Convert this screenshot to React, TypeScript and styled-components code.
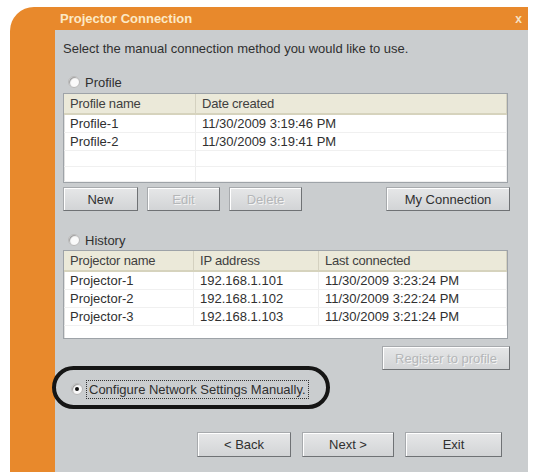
import React from "react";
import styled, { createGlobalStyle } from "styled-components";

const Global = createGlobalStyle`
  html, body { margin: 0; padding: 0; background: #ffffff; }
  body { font-family: "Liberation Sans", Arial, sans-serif; }
`;

const Frame = styled.div`
  margin: 7px 0 0 10px;
  width: 518px;
  height: 465px;
  background: #e8892c;
  border-top-left-radius: 24px;
  display: flex;
  flex-direction: column;
  overflow: visible;
`;

const TitleBar = styled.div`
  height: 23px;
  display: flex;
  align-items: center;
  justify-content: space-between;
  padding: 0 6px 0 50px;
  color: #fce9c6;
  font-weight: bold;
  font-size: 13px;
`;

const CloseX = styled.span`
  font-size: 12px;
  font-weight: bold;
  color: #f6e2c4;
`;

const Body = styled.div`
  flex: 1;
  display: flex;
`;

const Strip = styled.div`
  width: 45px;
`;

const Panel = styled.div`
  flex: 1;
  background: #cacdcf;
  padding: 11px 18px 0 8px;
  display: flex;
  flex-direction: column;
  color: #303030;
  font-size: 13px;
  position: relative;
`;

const Instruction = styled.div`
  height: 16px;
  line-height: 16px;
`;

const RadioRow = styled.label<{ $top: number }>`
  display: flex;
  align-items: center;
  gap: 5px;
  margin-top: ${(p) => p.$top}px;
  margin-left: 5px;
  height: 16px;
`;

const RadioDot = styled.span<{ $on?: boolean }>`
  width: 10px;
  height: 10px;
  border-radius: 50%;
  background: #fafafa;
  border: 1px solid #b8b8b8;
  box-shadow: inset 1px 1px 1px #9a9a9a;
  display: flex;
  align-items: center;
  justify-content: center;
  &::after {
    content: "";
    width: 4px;
    height: 4px;
    border-radius: 50%;
    background: ${(p) => (p.$on ? "#111" : "transparent")};
  }
`;

const ListBox = styled.div<{ $top: number; $height: number }>`
  margin-top: ${(p) => p.$top}px;
  height: ${(p) => p.$height}px;
  margin-right: 2px;
  background: #ffffff;
  border: 1px solid #9ea3a8;
  box-shadow: inset 1px 1px 0 #e0e0e0;
  display: flex;
  flex-direction: column;
  overflow: hidden;
`;

const HeaderRow = styled.div<{ $cols: string }>`
  display: grid;
  grid-template-columns: ${(p) => p.$cols};
  height: 19px;
  background: #ebe9d9;
  border-bottom: 2px solid #d6d3bd;
`;

const HeadCell = styled.div`
  padding-left: 6px;
  line-height: 19px;
  color: #404040;
  border-right: 1px solid #d4d1c0;
  letter-spacing: -0.2px;
  white-space: nowrap;
`;

const DataRow = styled.div<{ $cols: string }>`
  display: grid;
  grid-template-columns: ${(p) => p.$cols};
  height: 17px;
  border-bottom: 1px solid #f0f0f0;
`;

const Cell = styled.div`
  padding-left: 6px;
  line-height: 17px;
  border-right: 1px solid #eeeeee;
  white-space: nowrap;
`;

const ButtonRow = styled.div<{ $top: number }>`
  display: flex;
  gap: 9px;
  margin-top: ${(p) => p.$top}px;
`;

const Btn = styled.button<{ $w: number; $disabled?: boolean }>`
  width: ${(p) => p.$w}px;
  height: 24px;
  padding: 0;
  font-family: "Liberation Sans", Arial, sans-serif;
  font-size: 13px;
  background: linear-gradient(#e6e7e8, #d2d4d6);
  border: 1px solid #a7aaad;
  border-right-color: #6f7275;
  border-bottom-color: #6f7275;
  box-shadow: inset 1px 1px 0 #ffffff;
  color: ${(p) => (p.$disabled ? "#b4b6b8" : "#303030")};
  text-shadow: ${(p) => (p.$disabled ? "1px 1px 0 #f4f4f4" : "none")};
`;

const Spacer = styled.div`
  flex: 1;
`;

const OvalWrap = styled.div`
  position: relative;
  margin-top: 10px;
  height: 18px;
  display: flex;
  align-items: center;
  margin-left: 8px;
  gap: 5px;
`;

const Oval = styled.div`
  position: absolute;
  left: -19px;
  top: -14px;
  width: 270px;
  height: 35px;
  border: 4px solid #151515;
  border-radius: 24px;
  pointer-events: none;
`;

const FocusText = styled.span`
  outline: 1px dotted #333;
  outline-offset: 1px;
  padding: 0 1px;
`;

const Footer = styled.div`
  display: flex;
  justify-content: flex-end;
  gap: 11px;
  margin-top: 34px;
  padding-right: 8px;
`;

const FooterBtn = styled(Btn)`
  height: 25px;
`;

const profileCols = "132px 1fr";
const historyCols = "130px 125px 1fr";

export default function App() {
  return (
    <>
      <Global />
      <Frame>
        <TitleBar>
          <span>Projector Connection</span>
          <CloseX>x</CloseX>
        </TitleBar>
        <Body>
          <Strip />
          <Panel>
            <Instruction>Select the manual connection method you would like to use.</Instruction>
            <RadioRow $top={17}>
              <RadioDot />
              Profile
            </RadioRow>
            <ListBox $top={3} $height={88}>
              <HeaderRow $cols={profileCols}>
                <HeadCell>Profile name</HeadCell>
                <HeadCell>Date created</HeadCell>
              </HeaderRow>
              <DataRow $cols={profileCols}>
                <Cell>Profile-1</Cell>
                <Cell>11/30/2009 3:19:46 PM</Cell>
              </DataRow>
              <DataRow $cols={profileCols}>
                <Cell>Profile-2</Cell>
                <Cell>11/30/2009 3:19:41 PM</Cell>
              </DataRow>
              <DataRow $cols={profileCols}>
                <Cell />
                <Cell />
              </DataRow>
              <DataRow $cols={profileCols}>
                <Cell />
                <Cell />
              </DataRow>
            </ListBox>
            <ButtonRow $top={4}>
              <Btn $w={75}>New</Btn>
              <Btn $w={73} $disabled>Edit</Btn>
              <Btn $w={73} $disabled>Delete</Btn>
              <Spacer />
              <Btn $w={124}>My Connection</Btn>
            </ButtonRow>
            <RadioRow $top={21}>
              <RadioDot />
              History
            </RadioRow>
            <ListBox $top={2} $height={87}>
              <HeaderRow $cols={historyCols}>
                <HeadCell>Projector name</HeadCell>
                <HeadCell>IP address</HeadCell>
                <HeadCell>Last connected</HeadCell>
              </HeaderRow>
              <DataRow $cols={historyCols}>
                <Cell>Projector-1</Cell>
                <Cell>192.168.1.101</Cell>
                <Cell>11/30/2009 3:23:24 PM</Cell>
              </DataRow>
              <DataRow $cols={historyCols}>
                <Cell>Projector-2</Cell>
                <Cell>192.168.1.102</Cell>
                <Cell>11/30/2009 3:22:24 PM</Cell>
              </DataRow>
              <DataRow $cols={historyCols}>
                <Cell>Projector-3</Cell>
                <Cell>192.168.1.103</Cell>
                <Cell>11/30/2009 3:21:24 PM</Cell>
              </DataRow>
            </ListBox>
            <ButtonRow $top={7}>
              <Spacer />
              <Btn $w={128} $disabled>Register to profile</Btn>
            </ButtonRow>
            <OvalWrap>
              <Oval />
              <RadioDot $on />
              <FocusText>Configure Network Settings Manually.</FocusText>
            </OvalWrap>
            <Footer>
              <FooterBtn $w={94}>&lt; Back</FooterBtn>
              <FooterBtn $w={92}>Next &gt;</FooterBtn>
              <FooterBtn $w={97}>Exit</FooterBtn>
            </Footer>
          </Panel>
        </Body>
      </Frame>
    </>
  );
}
